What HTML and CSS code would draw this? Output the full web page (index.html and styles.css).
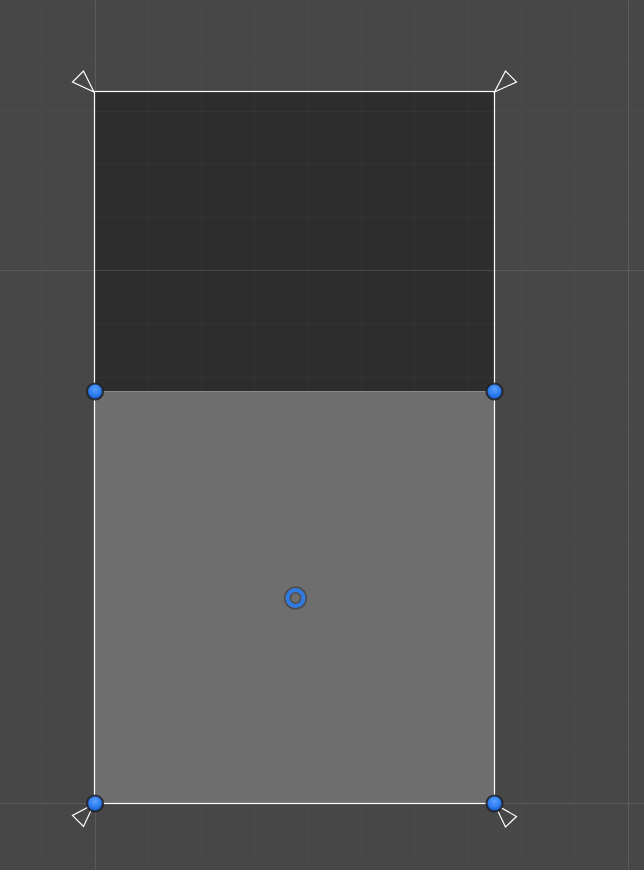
FILE: index.html
```html
<!DOCTYPE html>
<html>
<head>
<meta charset="utf-8">
<link rel="stylesheet" href="styles.css">
</head>
<body>
<div class="scene">
<svg class="canvas" width="644" height="870" viewBox="0 0 644 870" xmlns="http://www.w3.org/2000/svg">
  <defs>
    <radialGradient id="dotg" cx="0.5" cy="0.35" r="0.6">
      <stop offset="0" stop-color="#5aa0ff"/>
      <stop offset="0.6" stop-color="#2f7ef0"/>
      <stop offset="1" stop-color="#1a5fcf"/>
    </radialGradient>
    <clipPath id="topclip"><rect x="94" y="91" width="400" height="300"/></clipPath>
  </defs>
  <rect x="0" y="0" width="644" height="870" fill="#474747"/>
  <g class="minor" stroke="#4b4b4b" stroke-width="1">
    <line x1="41.5" y1="0" x2="41.5" y2="870"/>
    <line x1="148.5" y1="0" x2="148.5" y2="870"/>
    <line x1="201.5" y1="0" x2="201.5" y2="870"/>
    <line x1="254.5" y1="0" x2="254.5" y2="870"/>
    <line x1="308.5" y1="0" x2="308.5" y2="870"/>
    <line x1="361.5" y1="0" x2="361.5" y2="870"/>
    <line x1="414.5" y1="0" x2="414.5" y2="870"/>
    <line x1="468.5" y1="0" x2="468.5" y2="870"/>
    <line x1="521.5" y1="0" x2="521.5" y2="870"/>
    <line x1="574.5" y1="0" x2="574.5" y2="870"/>
    <line x1="0" y1="4.5" x2="644" y2="4.5"/>
    <line x1="0" y1="57.5" x2="644" y2="57.5"/>
    <line x1="0" y1="111.5" x2="644" y2="111.5"/>
    <line x1="0" y1="164.5" x2="644" y2="164.5"/>
    <line x1="0" y1="217.5" x2="644" y2="217.5"/>
    <line x1="0" y1="324.5" x2="644" y2="324.5"/>
    <line x1="0" y1="377.5" x2="644" y2="377.5"/>
    <line x1="0" y1="430.5" x2="644" y2="430.5"/>
    <line x1="0" y1="484.5" x2="644" y2="484.5"/>
    <line x1="0" y1="537.5" x2="644" y2="537.5"/>
    <line x1="0" y1="590.5" x2="644" y2="590.5"/>
    <line x1="0" y1="644.5" x2="644" y2="644.5"/>
    <line x1="0" y1="697.5" x2="644" y2="697.5"/>
    <line x1="0" y1="750.5" x2="644" y2="750.5"/>
    <line x1="0" y1="857.5" x2="644" y2="857.5"/>
  </g>
  <g stroke="#5b5b5b" stroke-width="1">
    <line x1="95.5" y1="0" x2="95.5" y2="870"/>
    <line x1="628.5" y1="0" x2="628.5" y2="870"/>
    <line x1="0" y1="270.5" x2="644" y2="270.5"/>
    <line x1="0" y1="803.5" x2="644" y2="803.5"/>
  </g>
  <rect x="94" y="91" width="400" height="300" fill="#2d2d2d"/>
  <g clip-path="url(#topclip)" stroke="#333333" stroke-width="1">
    <line x1="148.5" y1="0" x2="148.5" y2="870"/>
    <line x1="201.5" y1="0" x2="201.5" y2="870"/>
    <line x1="254.5" y1="0" x2="254.5" y2="870"/>
    <line x1="308.5" y1="0" x2="308.5" y2="870"/>
    <line x1="361.5" y1="0" x2="361.5" y2="870"/>
    <line x1="414.5" y1="0" x2="414.5" y2="870"/>
    <line x1="468.5" y1="0" x2="468.5" y2="870"/>
    <line x1="0" y1="111.5" x2="644" y2="111.5"/>
    <line x1="0" y1="164.5" x2="644" y2="164.5"/>
    <line x1="0" y1="217.5" x2="644" y2="217.5"/>
    <line x1="0" y1="324.5" x2="644" y2="324.5"/>
    <line x1="0" y1="377.5" x2="644" y2="377.5"/>
    <line x1="0" y1="270.5" x2="644" y2="270.5" stroke="#474747"/>
  </g>
  <rect x="94" y="391" width="400" height="412" fill="#6e6e6e"/>
  <line x1="94" y1="391.5" x2="494" y2="391.5" stroke="#8a8a8a"/>
  <rect x="94.5" y="91.5" width="400" height="712" fill="none" stroke="#ffffff" stroke-width="1.2"/>
  <g fill="none" stroke="#ffffff" stroke-width="1.2" stroke-linejoin="miter">
    <polygon points="94,92 83.5,71 72.5,82"/>
    <polygon points="494.5,92 505.5,71 516.5,82"/>
    <polygon points="94,804 72.5,815.5 83.5,826.5"/>
    <polygon points="494.5,804 516.5,816.5 505.5,827"/>
  </g>
  <g stroke="#1e1e1e" stroke-opacity="0.8" stroke-width="2.2" fill="url(#dotg)">
    <circle cx="95" cy="391.5" r="8"/>
    <circle cx="494.5" cy="391.5" r="8"/>
    <circle cx="95" cy="803.5" r="8"/>
    <circle cx="494.5" cy="803.5" r="8"/>
  </g>
  <g fill="none" stroke="#1e1e1e" stroke-opacity="0.45" stroke-width="1.5">
    <circle cx="295.5" cy="598" r="10.8"/>
    <circle cx="295.5" cy="598" r="5.2"/>
  </g>
  <circle cx="295.5" cy="598" r="8" fill="none" stroke="#3079e0" stroke-width="4"/>
</svg>
</div>
</body>
</html>
```
FILE: styles.css
```css
html, body {
  margin: 0;
  padding: 0;
  background: #474747;
  overflow: hidden;
}
.scene {
  width: 644px;
  height: 870px;
}
.canvas {
  display: block;
}
```
